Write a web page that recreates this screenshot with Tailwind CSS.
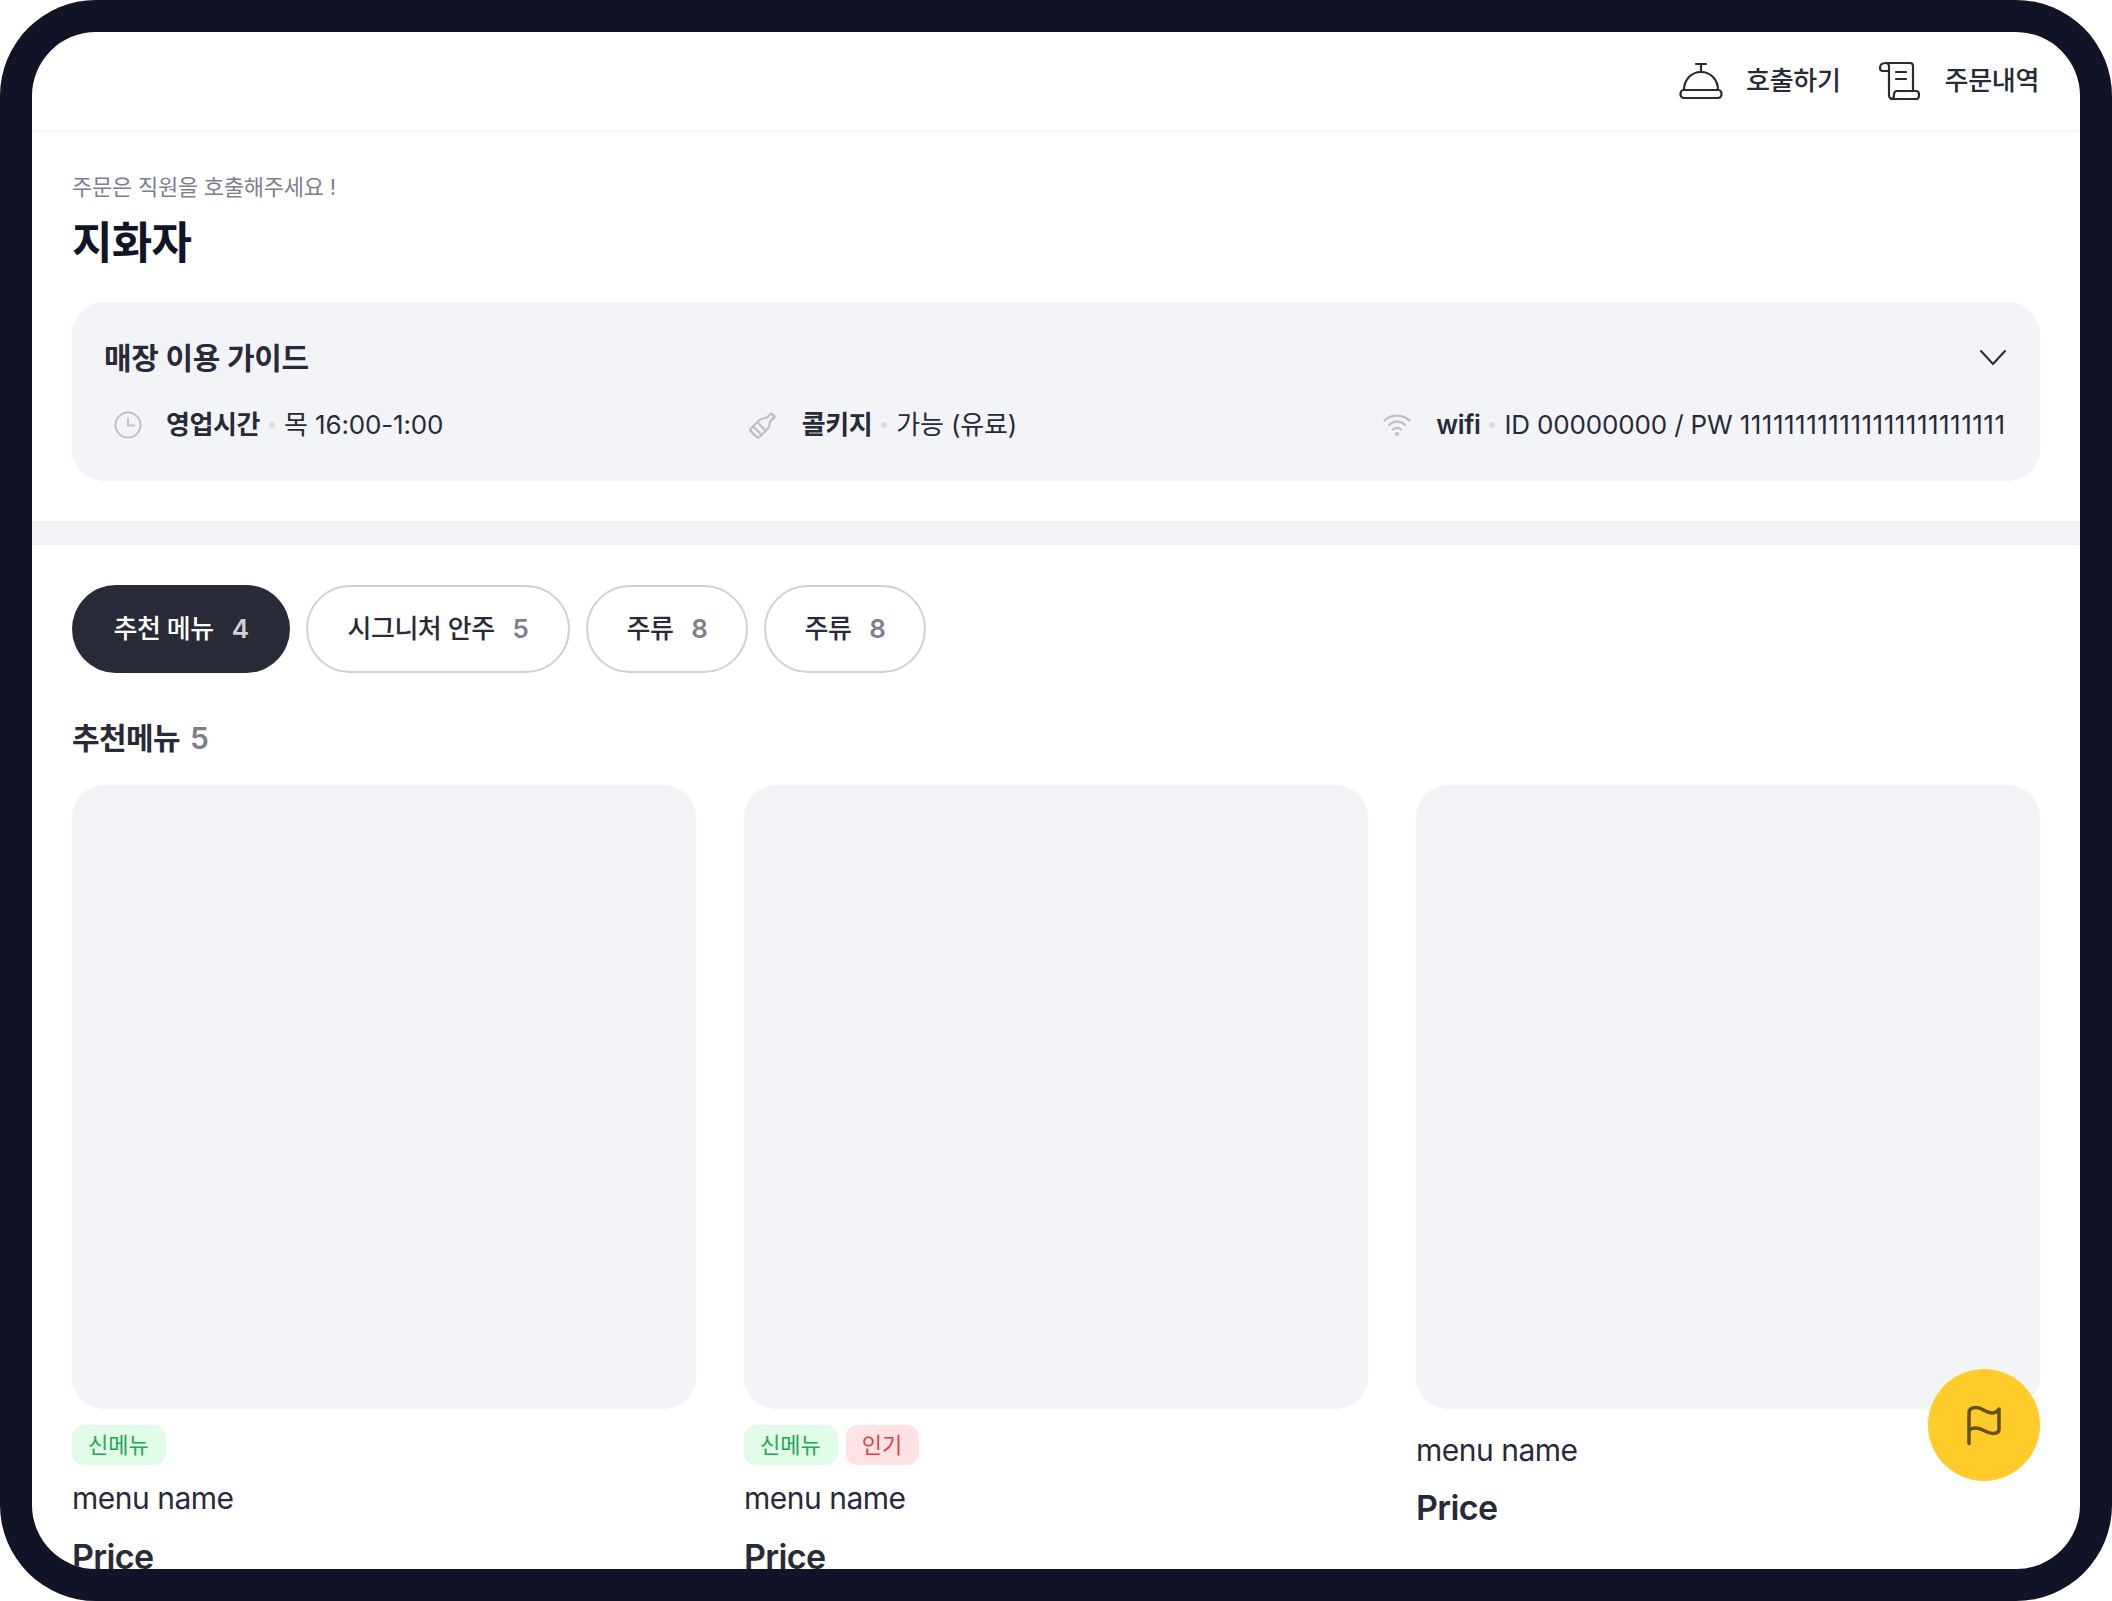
<!DOCTYPE html>
<html lang="ko"><head><meta charset="utf-8">
<script src="https://cdn.jsdelivr.net/npm/@tailwindcss/browser@4"></script>
</head>
<body class="bg-white font-['Inter','Noto_Sans_CJK_KR',sans-serif] text-[#282a38]">
<div class="w-[2112px] h-[1601px] rounded-[96px] bg-[#111326] p-8">
<div class="relative w-full h-full rounded-[64px] bg-white overflow-hidden">
  <header class="h-[98px] shadow-[0_2px_3px_rgba(40,42,56,0.05)] flex items-center justify-end pr-[41px] gap-[37px]">
    <div class="flex items-center gap-[23px]">
      <svg width="44" height="38" viewBox="0 0 44 38" fill="none" stroke="#282a38" stroke-width="2.2" stroke-linecap="round" stroke-linejoin="round"><path d="M17 2h10M22 2v8"/><path d="M5 28c0-10 7-18 17-18s17 8 17 18"/><rect x="1.5" y="28" width="41" height="8" rx="3.500"/></svg>
      <span class="text-[26px] font-medium tracking-[-0.3px] leading-none">호출하기</span>
    </div>
    <div class="flex items-center gap-[25px]">
      <svg width="42" height="40" viewBox="0 0 42 40" fill="none" stroke="#282a38" stroke-width="2.2" stroke-linecap="round" stroke-linejoin="round"><path d="M8 2h24c2 0 3 1 3 3v25"/><path d="M8 2C4 2 2 4 2 7c0 2 1 3 3 3h6"/><path d="M8 2c2 0 3 2 3 4v28c0 2 1 4 4 4h23c2 0 3-2 3-4s-1-4-3-4H19c-2 0-3 2-3 4s-1 4-3 4"/><path d="M18 11h10M18 18h10"/></svg>
      <span class="text-[26px] font-medium tracking-[-0.3px] leading-none">주문내역</span>
    </div>
  </header>

  <section class="px-[40px] pt-[42px]">
    <p class="text-[22px] leading-[30px] text-[#7d7f8c] tracking-[-0.25px]">주문은 직원을 호출해주세요 !</p>
    <h1 class="mt-[11px] text-[44px] leading-[60px] font-semibold text-[#111427] tracking-[-0.7px]">지화자</h1>
    <div class="mt-[29px] h-[179px] rounded-[32px] bg-[#f3f4f8] px-[32px] pt-[34px]">
      <div class="flex items-center justify-between h-[44px]">
        <h2 class="text-[30px] font-semibold leading-none tracking-[-0.4px]">매장 이용 가이드</h2>
        <svg class="mr-[-1px]" width="32" height="18" viewBox="0 0 32 18" fill="none" stroke="#282a38" stroke-width="2" stroke-linecap="round" stroke-linejoin="round"><path d="M4 2l12 13L28 2"/></svg>
      </div>
      <div class="mt-[23px] grid grid-cols-3 items-center h-[44px] text-[26px] tracking-[-0.15px] leading-none whitespace-nowrap">
        <div class="flex items-center">
          <svg class="ml-[10px] mr-[24px]" width="28" height="28" viewBox="0 0 28 28" fill="none" stroke="#bfc0c7" stroke-width="2" stroke-linecap="round" stroke-linejoin="round"><circle cx="14" cy="14" r="12.500"/><path d="M14 8v6.500h6"/></svg>
          <b class="font-semibold tracking-[-0.4px]">영업시간</b><i class="mx-[9px] w-[6px] h-[6px] rounded-full bg-[#dcdde2]"></i><span>목 16:00-1:00</span>
        </div>
        <div class="flex items-center">
          <svg class="ml-[10px] mr-[25px]" width="28" height="28" viewBox="0 0 28 28" fill="none" stroke="#bfc0c7" stroke-width="2.200" stroke-linecap="round" stroke-linejoin="round"><g transform="rotate(45 14 14)"><path d="M11.500 0h5v6c0 2 3.500 3 3.500 7v12c0 1-1 2-2 2h-8c-1 0-2-1-2-2V13c0-4 3.500-5 3.500-7z"/><path d="M8 16h12M8 22h12"/></g></svg>
          <b class="font-semibold tracking-[-0.4px]">콜키지</b><i class="mx-[9px] w-[6px] h-[6px] rounded-full bg-[#dcdde2]"></i><span>가능 (유료)</span>
        </div>
        <div class="flex items-center">
          <svg class="ml-[10px] mr-[25px]" width="28" height="24" viewBox="0 0 28 24" fill="none" stroke="#bfc0c7" stroke-width="2.200" stroke-linecap="round"><path d="M1.500 7.500C8.500 1 19.500 1 26.500 7.500"/><path d="M6 12c5-4.500 11-4.500 16 0"/><path d="M10 16.500c2.500-2 5.500-2 8 0"/><circle cx="14" cy="21" r="2" fill="#bfc0c7" stroke="none"/></svg>
          <b class="font-semibold tracking-[-0.4px]">wifi</b><i class="mx-[9px] w-[6px] h-[6px] rounded-full bg-[#dcdde2]"></i><span>ID 00000000 / PW <span class="tracking-[0.5px]">111111111111111111111111</span></span>
        </div>
      </div>
    </div>
  </section>

  <div class="mt-[40px] h-[24px] bg-[#f3f4f8] border-y border-[#eff0f4]"></div>

  <section class="px-[40px] pt-[40px]">
    <nav class="flex gap-[16px] text-[26px] font-medium leading-none tracking-[-0.5px]">
      <a class="h-[88px] w-[218px] rounded-full bg-[#282a38] text-white flex items-center justify-center gap-[18px]">추천 메뉴 <span class="text-[#d0d1d8] font-semibold">4</span></a>
      <a class="h-[88px] w-[264px] rounded-full border-2 border-[#d0d1d8] flex items-center justify-center gap-[18px]">시그니처 안주 <span class="text-[#7d7f8c] font-semibold">5</span></a>
      <a class="h-[88px] w-[162px] rounded-full border-2 border-[#d0d1d8] flex items-center justify-center gap-[18px]">주류 <span class="text-[#7d7f8c] font-semibold">8</span></a>
      <a class="h-[88px] w-[162px] rounded-full border-2 border-[#d0d1d8] flex items-center justify-center gap-[18px]">주류 <span class="text-[#7d7f8c] font-semibold">8</span></a>
    </nav>
    <h3 class="mt-[43px] h-[44px] flex items-center gap-[10px] text-[30px] font-semibold leading-none tracking-[-0.6px]">추천메뉴 <span class="text-[#7d7f8c]">5</span></h3>
    <div class="mt-[25px] grid grid-cols-3 gap-[48px]">
      <article>
        <div class="h-[624px] rounded-[32px] bg-[#f3f4f8]"></div>
        <div class="mt-[16px] flex gap-[8px] text-[22px] leading-none">
          <span class="h-[40px] pl-[16px] pr-[17px] rounded-[12px] bg-[#e3fce7] text-[#22a84f] flex items-center">신메뉴</span>
        </div>
        <p class="mt-[13px] text-[30px] leading-[40px] tracking-[-0.5px]">menu name</p>
        <p class="mt-[17px] text-[34px] leading-[44px] font-semibold tracking-[-0.6px]">Price</p>
      </article>
      <article>
        <div class="h-[624px] rounded-[32px] bg-[#f3f4f8]"></div>
        <div class="mt-[16px] flex gap-[8px] text-[22px] leading-none">
          <span class="h-[40px] pl-[16px] pr-[17px] rounded-[12px] bg-[#e3fce7] text-[#22a84f] flex items-center">신메뉴</span>
          <span class="h-[40px] pl-[16px] pr-[17px] rounded-[12px] bg-[#fee2e4] text-[#e53e46] flex items-center">인기</span>
        </div>
        <p class="mt-[13px] text-[30px] leading-[40px] tracking-[-0.5px]">menu name</p>
        <p class="mt-[17px] text-[34px] leading-[44px] font-semibold tracking-[-0.6px]">Price</p>
      </article>
      <article>
        <div class="h-[624px] rounded-[32px] bg-[#f3f4f8]"></div>
        <p class="mt-[21px] text-[30px] leading-[40px] tracking-[-0.5px]">menu name</p>
        <p class="mt-[16px] text-[34px] leading-[44px] font-semibold tracking-[-0.6px]">Price</p>
      </article>
    </div>
  </section>

  <button class="absolute left-[1896px] top-[1337px] w-[112px] h-[112px] rounded-full bg-[#ffcc29] flex items-center justify-center">
    <svg width="36" height="41" viewBox="0 0 36 41" fill="none" stroke="#66500f" stroke-width="3.500" stroke-linecap="round" stroke-linejoin="round"><path d="M3 38.500V8Q3 2.500 10 2.500C17 2.500 19 8 26 8C29 8 31 7 33 4V24Q33 28.500 27 28.500C20 28.500 17 23 10 23C6 23 3 24.500 3 26.500"/></svg>
  </button>
</div>
</div>
</body></html>
